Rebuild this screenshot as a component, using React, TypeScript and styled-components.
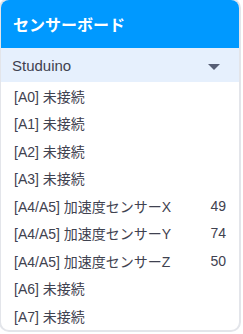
import styled, { createGlobalStyle } from "styled-components";

const GlobalStyle = createGlobalStyle`
  html, body {
    margin: 0;
    padding: 0;
    background: #ffffff;
  }
  body {
    font-family: "Liberation Sans", "Noto Sans CJK JP", sans-serif;
    color: #575e75;
  }
`;

const Panel = styled.div`
  width: 238px;
  margin-left: -1px;
  margin-top: -2px;
  border: 2px solid #e3e5ea;
  border-radius: 10px;
  overflow: hidden;
  background: #ffffff;
`;

const Header = styled.div`
  height: 48px;
  background: #0099ff;
  color: #ffffff;
  display: flex;
  align-items: center;
  padding: 0 12px;
  font-family: "Noto Sans CJK JP", sans-serif;
  font-weight: 700;
  font-size: 16px;
`;

const Select = styled.div`
  height: 34px;
  background: #e6f0fd;
  display: flex;
  align-items: center;
  justify-content: space-between;
  padding: 0 19px 0 11px;
  font-size: 15px;
  color: #3f4250;
`;

const Caret = styled.span`
  width: 0;
  height: 0;
  border-left: 6px solid transparent;
  border-right: 6px solid transparent;
  border-top: 6px solid #575e75;
  margin-top: 3px;
`;

const List = styled.ul`
  list-style: none;
  margin: 0;
  padding: 0;
`;

const Row = styled.li`
  height: 27.5px;
  display: flex;
  align-items: center;
  justify-content: space-between;
  padding: 0 13px 0 13px;
  font-size: 14px;
  color: #3f4250;
`;

const Value = styled.span`
  font-size: 14px;
`;

interface Sensor {
  label: string;
  value?: number;
}

const sensors: Sensor[] = [
  { label: "[A0] 未接続" },
  { label: "[A1] 未接続" },
  { label: "[A2] 未接続" },
  { label: "[A3] 未接続" },
  { label: "[A4/A5] 加速度センサーX", value: 49 },
  { label: "[A4/A5] 加速度センサーY", value: 74 },
  { label: "[A4/A5] 加速度センサーZ", value: 50 },
  { label: "[A6] 未接続" },
  { label: "[A7] 未接続" },
];

const App = (): JSX.Element => {
  return (
    <>
      <GlobalStyle />
      <Panel>
        <Header>センサーボード</Header>
        <Select>
          <span>Studuino</span>
          <Caret />
        </Select>
        <List>
          {sensors.map((sensor) => (
            <Row key={sensor.label}>
              <span>{sensor.label}</span>
              {sensor.value !== undefined && <Value>{sensor.value}</Value>}
            </Row>
          ))}
        </List>
      </Panel>
    </>
  );
};

export default App;
